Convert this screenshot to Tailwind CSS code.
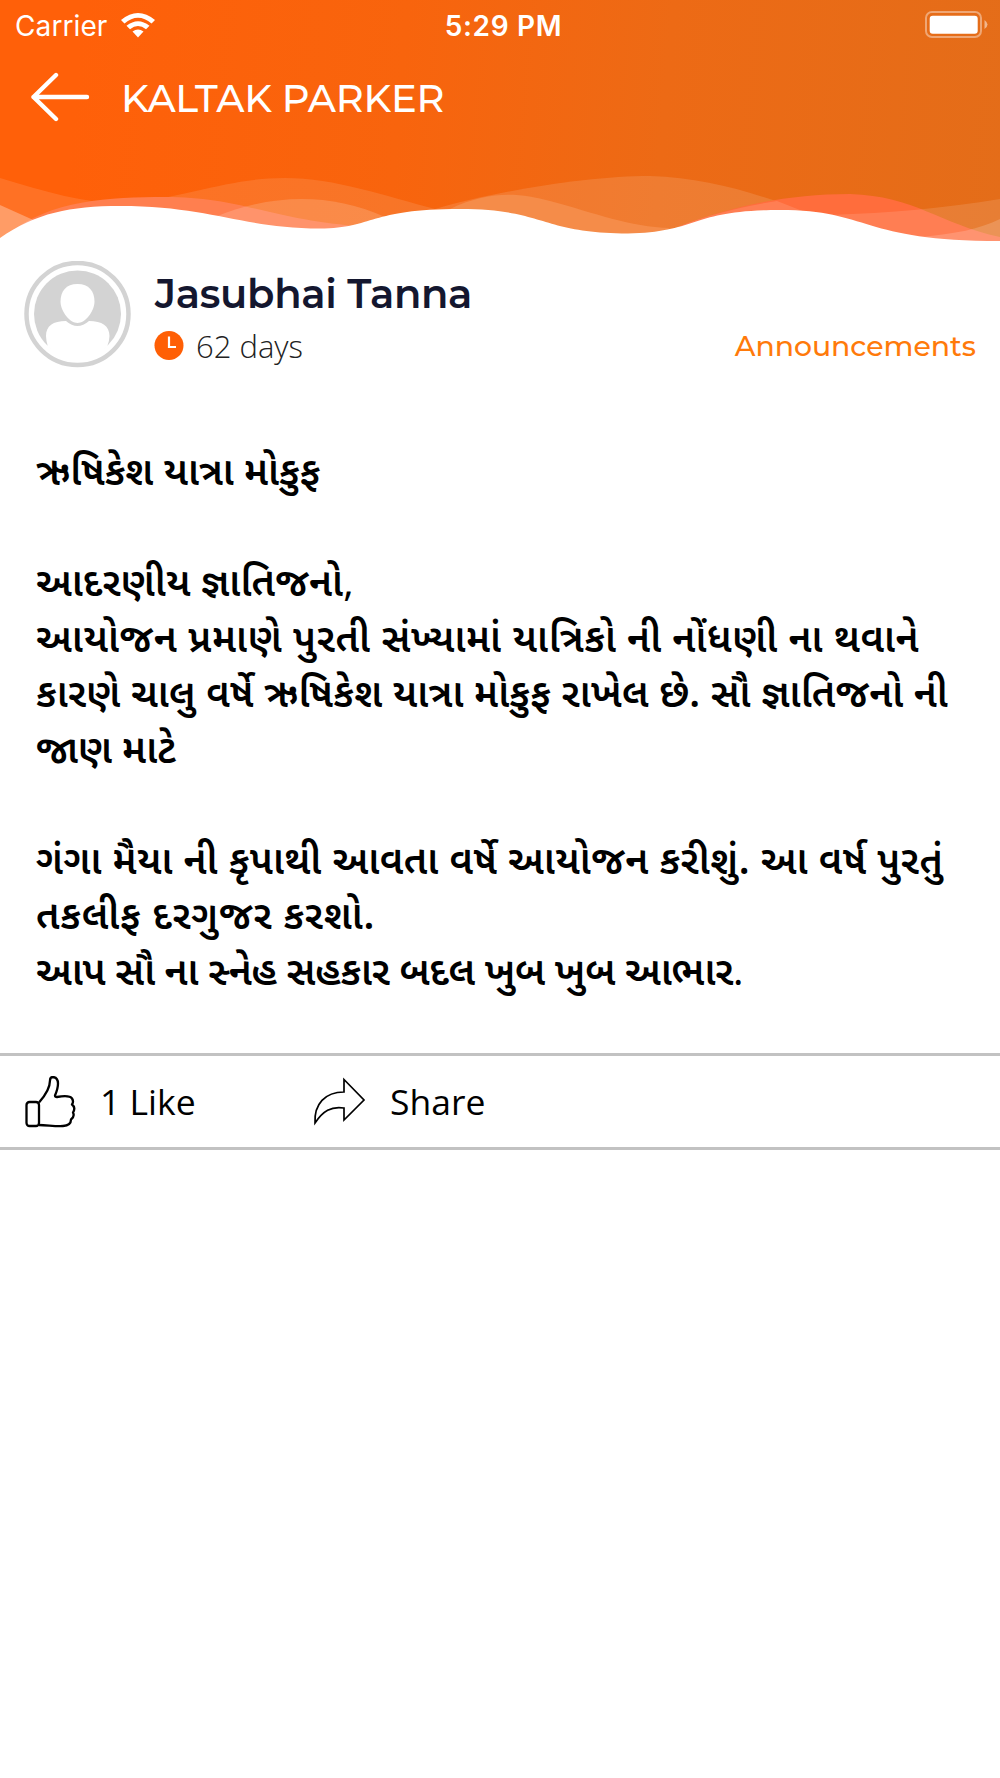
<!DOCTYPE html>
<html lang="gu">
<head>
  <meta charset="UTF-8" />
  <title>Kaltak Parker</title>
  <meta name="viewport" content="width=device-width, initial-scale=1.0" />
  <script src="https://cdn.jsdelivr.net/npm/@tailwindcss/browser@4"></script>
</head>
<body class="bg-white text-black font-['Open_Sans','Noto_Sans',sans-serif]">

  <header class="relative h-[242px] text-white overflow-hidden bg-[linear-gradient(95deg,#ff6009_8%,#f8640d_40%,#ed6a15_66%,#e46d19_100%)]">

    <!-- wave layers, white page edge last -->
    <svg class="absolute inset-0" width="1000" height="242" viewBox="0 0 1000 242">
      <path fill="#fff" fill-opacity=".11" d="M0 178C45 192 85 203 125 204C190 196 230 178 285 178C335 178 385 196 435 209L435 242H0Z" />
      <path fill="#fff" fill-opacity=".12" d="M435 209C500 190 590 176 650 176C705 178 750 191 800 210V242H435Z" />
      <path fill="#ff7f4f" d="M8 234C50 200 110 197 165 197C240 197 270 219 355 226L320 242H8Z" />
      <path fill="#ff6d3c" d="M680 226C730 207 785 194 850 194C915 196 940 224 1000 237V242H680Z" />
      <path fill="#fff" fill-opacity=".12" d="M680 226C710 214 745 206 777 201L805 212V242H680Z" />
      <path fill="#fff" fill-opacity=".12" d="M830 215C890 213 945 208 1000 199V242H830Z" />
      <path fill="#fff" fill-opacity=".3" d="M0 205L40 223L0 242Z" />
      <path fill="#fff" fill-opacity=".16" d="M215 217C270 194 330 192 385 217V242H215Z" />
      <path fill="#f58c49" d="M450 209C490 190 520 193 550 201C595 213 630 227 670 228L640 242H450Z" />
      <path fill="#fff" fill-opacity=".17" d="M920 237C955 234 980 229 1000 219V242H920Z" />
      <path fill="#fff" d="M0 238C36 213 70 206 120 206C210 206 240 228 320 228.500C375 228 368 209 460 209C545 209 540 233 628 233.500C700 232 690 210 780 210C870 210 860 241 1000 241V242H0Z" />
    </svg>

    <div class="relative grid grid-cols-3 items-center h-[50px] pl-[15px] pr-[12px] font-[Inter,sans-serif] text-[28px]">
      <div class="flex items-center gap-[14px] pt-px">
        <span class="tracking-[0.1px]">Carrier</span>
        <svg width="34" height="25" viewBox="0 0 34 25" fill="#fff">
          <path d="M0 7Q17-7 34 7L30.500 10.500Q17-1 3.500 10.500Z" />
          <path d="M5.500 12.800Q17 3.500 28.500 12.800L25 16.300Q17 9.800 9 16.300Z" />
          <path d="M11.500 18.500Q17 14.500 22.500 18.500L17 24.500Z" />
        </svg>
      </div>
      <span class="text-center font-semibold tracking-[0.7px] whitespace-nowrap pl-1 pt-px">5:29 PM</span>
      <svg class="justify-self-end" width="63" height="28" viewBox="0 0 63 28" fill="#fff">
        <rect x="1" y="1" width="55" height="25" rx="6" fill="none" stroke="#fff" stroke-opacity=".4" stroke-width="2" />
        <rect x="4.700" y="4.700" width="48" height="18" rx="3" />
        <path fill-opacity=".5" d="M59.500 9Q65.500 13.500 59.500 18Z" />
      </svg>
    </div>

    <div class="relative flex items-start gap-[31px] pl-[31px] mt-[22px]">
      <svg width="59" height="50" viewBox="0 0 59 50" fill="none" stroke="#fff" stroke-width="4.400" stroke-linecap="round" stroke-linejoin="round">
        <path d="M25 3L2.500 25L25 47M2.500 25H56" />
      </svg>
      <h1 class="pt-[2px] text-[38.500px] leading-[50px] font-medium tracking-[-0.2px] whitespace-nowrap font-[Montserrat,Inter,sans-serif]">KALTAK PARKER</h1>
    </div>
  </header>

  <section class="flex pl-6 pr-6 pt-[19px] gap-[23px] h-[126px]">
    <svg width="107" height="107" viewBox="0 0 107 107">
      <circle cx="53.500" cy="53" r="51" fill="#fff" stroke="#d3d3d3" stroke-width="4.500" />
      <circle cx="53.500" cy="53" r="43.500" fill="#d3d3d3" />
      <path fill="#fff" d="M53.500 23C65 23 70.500 30 70.500 41C70 51 61 62 53.500 62C46 62 37 51 36.500 41C36.500 30 42 23 53.500 23Z" />
      <path fill="#fff" d="M42 60Q53.500 70 65 60C78 60 85.500 65 85.500 75Q85.500 80 83 86Q70 99 53.500 99Q37 99 24 86Q22 80 22 75C22 65 29 60 42 60Z" />
    </svg>
    <div class="flex-1 pt-[8px]">
      <h2 class="pl-px text-[40px] leading-[50px] font-semibold text-[#14172f] tracking-[-0.3px] whitespace-nowrap font-[Montserrat,Inter,sans-serif]">Jasubhai Tanna</h2>
      <div class="flex items-center h-[50px] mt-[2px]">
        <svg width="30" height="30" viewBox="0 0 30 30">
          <circle cx="15" cy="14.500" r="14.500" fill="#ff5f05" />
          <path d="M15 5.500V16H22" fill="none" stroke="#fff" stroke-width="2.200" />
        </svg>
        <span class="ml-[12px] text-[31px] font-light text-[#222] whitespace-nowrap">62 days</span>
        <span class="ml-auto text-[28.300px] font-medium text-[#ff7a0a] whitespace-nowrap font-[Montserrat,Inter,sans-serif]">Announcements</span>
      </div>
    </div>
  </section>

  <main class="pl-[36px] pt-[80px] h-[685px] text-[39px] leading-[55.500px] font-semibold whitespace-nowrap font-['Noto_Sans_Gujarati','Noto_Sans','Open_Sans',sans-serif]">
    <p>ઋષિકેશ યાત્રા મોકુફ</p>
    <p class="mt-[55.500px] tracking-[0.220px]">આદરણીય જ્ઞાતિજનો<span class="font-normal">,</span></p>
    <p class="tracking-[0.650px]">આયોજન પ્રમાણે પુરતી સંખ્યામાં યાત્રિકો ની નોંધણી ના થવાને</p>
    <p class="tracking-[0.250px]">કારણે ચાલુ વર્ષે ઋષિકેશ યાત્રા મોકુફ રાખેલ છે. સૌ જ્ઞાતિજનો ની</p>
    <p>જાણ માટે</p>
    <p class="mt-[55.500px] tracking-[0.500px]">ગંગા મૈયા ની કૃપાથી આવતા વર્ષે આયોજન કરીશું. આ વર્ષ પુરતું</p>
    <p class="tracking-[0.780px]">તકલીફ દરગુજર કરશો.</p>
    <p class="tracking-[-0.250px]">આપ સૌ ના સ્નેહ સહકાર બદલ ખુબ ખુબ આભાર<span class="font-normal">.</span></p>
  </main>

  <footer class="flex items-center h-[97px] border-y-[3px] border-[#c2c2c2] text-[35.500px] whitespace-nowrap">
    <button class="flex items-center ml-[25px] w-[288px] gap-[24px]">
      <svg width="51" height="52" viewBox="0 0 51 52" fill="none" stroke="#000" stroke-width="2.300" stroke-linejoin="round">
        <rect x="1.500" y="26" width="12.500" height="24" rx="3" />
        <path d="M14 26.500C22 17.500 25 11.500 25 4.500Q25 1 28 1Q33 1.500 33 7.500Q33 12.500 30 19.500Q30 21 32 21C38 20 45 19.500 47 22.500Q49 25.500 47 28.500Q51 31.500 48 36.500Q50 40.500 46 43.500Q46 49.500 38 50C30 50.500 22 49 14 49" />
      </svg>
      <span>1 Like</span>
    </button>
    <button class="flex items-center gap-[24px]">
      <svg width="53" height="49" viewBox="0 0 53 49" fill="none" stroke="#000" stroke-width="1.700">
        <path d="M31 2.500L51 23L31 43V31C18 29 10 34 2 46C1 27 12 15 31 15Z" />
      </svg>
      <span>Share</span>
    </button>
  </footer>

</body>
</html>
